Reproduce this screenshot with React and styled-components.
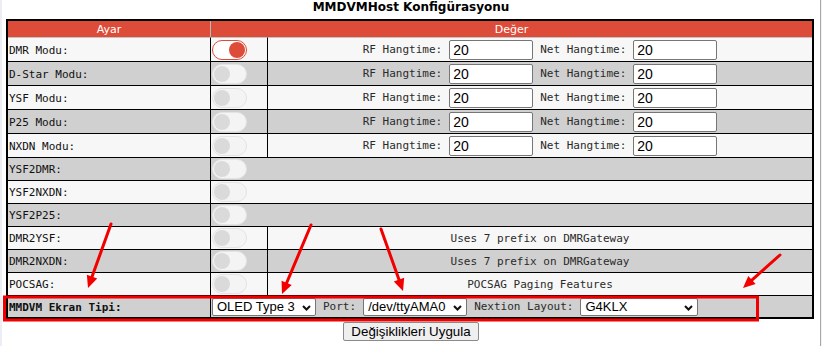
import React from 'react';
import styled, { createGlobalStyle } from 'styled-components';

const Global = createGlobalStyle`
  html, body { margin: 0; padding: 0; background: #fff; }
  body { width: 822px; height: 346px; overflow: hidden; }
  * { box-sizing: border-box; }
`;

const Page = styled.div`
  position: relative;
  width: 822px;
  height: 346px;
  box-shadow: inset 2px 0 0 #eceef3, inset -1px 0 0 #f2f2f2, inset -2px 0 0 #a8a8a8;
`;

const Title = styled.h2`
  margin: 0;
  height: 19px;
  line-height: 22px;
  text-align: center;
  font: bold 12px "DejaVu Sans", sans-serif;
  color: #000;
`;

const Table = styled.table`
  margin-left: 6px;
  width: 808px;
  border: 2px solid #000;
  border-spacing: 0;
  table-layout: fixed;
`;

const Col = styled.col`
  width: ${(p) => p.$w}px;
`;

const Th = styled.th`
  height: 16px;
  padding: 0;
  background: #dd4b39;
  color: #fff;
  font: normal 11px "DejaVu Sans", sans-serif;
  text-align: center;
  vertical-align: middle;
  border-left: ${(p) => (p.$first ? 'none' : '1px solid #b9b9b9')};
`;

const Tr = styled.tr`
  background: ${(p) => (p.$alt ? '#d0d0d0' : '#f7f7f7')};
`;

const Td = styled.td`
  height: ${(p) => p.$h}px;
  padding: 0;
  vertical-align: middle;
  border-top: 1px solid ${(p) => (p.$firstRow ? '#c4c4c4' : '#000')};
  border-left: ${(p) => (p.$first ? 'none' : '1px solid #000')};
`;

const Label = styled.div`
  padding: 1px 0 0 1px;
  font: ${(p) => (p.$bold ? 'bold' : 'normal')} 11px "DejaVu Sans Mono", monospace;
  color: #111;
  white-space: nowrap;
`;

const ToggleBox = styled.div`
  padding-left: 1px;
  display: flex;
  align-items: center;
`;

const Toggle = styled.span`
  position: relative;
  display: inline-block;
  width: 35px;
  height: 20px;
  border-radius: 10px;
  border: 1px solid ${(p) => (p.$on ? '#dd4b39' : '#e4e4e4')};
  background: ${(p) => (p.$on ? '#fff' : '#f4f4f4')};
  &::after {
    content: '';
    position: absolute;
    top: 1px;
    left: ${(p) => (p.$on ? '16px' : '1px')};
    width: 16px;
    height: 16px;
    border-radius: 50%;
    background: ${(p) => (p.$on ? '#dd4b39' : '#dadada')};
  }
`;

const Center = styled.div`
  display: flex;
  justify-content: center;
  align-items: center;
  gap: 7px;
  font: 11px "DejaVu Sans Mono", monospace;
  color: #2a2a2a;
  white-space: nowrap;
`;

const Inline = styled.div`
  display: flex;
  align-items: center;
  gap: 7px;
  padding-left: 1px;
  font: 11px "DejaVu Sans Mono", monospace;
  color: #2a2a2a;
  white-space: nowrap;
`;

const Num = styled.input`
  width: 84px;
  height: 20px;
  border: 1px solid #767676;
  border-radius: 2px;
  padding: 0 3px;
  background: #fff;
  color: #000;
  font: 14px "Liberation Sans", Arial, sans-serif;
  outline: none;
`;

const SelectWrap = styled.span`
  position: relative;
  display: inline-block;
  width: ${(p) => p.$w}px;
  height: 18px;
`;

const Select = styled.select`
  appearance: none;
  -webkit-appearance: none;
  width: 100%;
  height: 18px;
  border: 1px solid #767676;
  border-radius: 2px;
  padding: 0 0 0 4px;
  background: #fff;
  color: #000;
  font: 13px "Liberation Sans", Arial, sans-serif;
  outline: none;
`;

const Chevron = styled.svg`
  position: absolute;
  right: 5px;
  top: 7px;
  width: 9px;
  height: 6px;
  pointer-events: none;
`;

const Apply = styled.button`
  display: block;
  margin: 3px auto 0;
  height: 19px;
  padding: 0 7px;
  border: 1px solid #8a8a8a;
  border-radius: 2px;
  background: #efefef;
  color: #000;
  font: 13.33px "Liberation Sans", Arial, sans-serif;
  line-height: 17px;
`;

const Overlay = styled.svg`
  position: absolute;
  left: 0;
  top: 0;
  width: 822px;
  height: 346px;
  pointer-events: none;
`;

const RED = '#f20000';

function Arrow({ x1, y1, x2, y2 }) {
  const dx = x2 - x1;
  const dy = y2 - y1;
  const len = Math.hypot(dx, dy);
  const ux = dx / len;
  const uy = dy / len;
  const hl = 12;
  const hw = 5.5;
  const bx = x2 - ux * hl;
  const by = y2 - uy * hl;
  const px = -uy;
  const py = ux;
  return (
    <g>
      <line x1={x1} y1={y1} x2={bx + ux * 2} y2={by + uy * 2} stroke={RED} strokeWidth="3" strokeLinecap="round" />
      <polygon
        points={`${x2},${y2} ${bx + px * hw},${by + py * hw} ${bx - px * hw},${by - py * hw}`}
        fill={RED}
      />
    </g>
  );
}

function Dropdown({ w, value }) {
  return (
    <SelectWrap $w={w}>
      <Select defaultValue={value}>
        <option>{value}</option>
      </Select>
      <Chevron viewBox="0 0 9 6">
        <polyline points="1,1 4.5,4.5 8,1" fill="none" stroke="#111" strokeWidth="2" />
      </Chevron>
    </SelectWrap>
  );
}

const rows = [
  { label: 'DMR Modu:', on: true, hang: true },
  { label: 'D-Star Modu:', hang: true },
  { label: 'YSF Modu:', hang: true },
  { label: 'P25 Modu:', hang: true },
  { label: 'NXDN Modu:', hang: true },
  { label: 'YSF2DMR:' },
  { label: 'YSF2NXDN:' },
  { label: 'YSF2P25:' },
  { label: 'DMR2YSF:', note: 'Uses 7 prefix on DMRGateway' },
  { label: 'DMR2NXDN:', note: 'Uses 7 prefix on DMRGateway' },
  { label: 'POCSAG:', note: 'POCSAG Paging Features' },
];

export default function App() {
  return (
    <Page>
      <Global />
      <Title>MMDVMHost Konfigürasyonu</Title>
      <Table>
        <colgroup>
          <Col $w={202} />
          <Col $w={57} />
          <Col $w={545} />
        </colgroup>
        <thead>
          <tr>
            <Th $first>Ayar</Th>
            <Th colSpan={2}>Değer</Th>
          </tr>
        </thead>
        <tbody>
          {rows.map((r, i) => {
            const h = r.hang ? 24 : 23;
            const split = r.hang || r.note;
            return (
              <Tr key={r.label} $alt={i % 2 === 1}>
                <Td $first $h={h} $firstRow={i === 0}>
                  <Label>{r.label}</Label>
                </Td>
                <Td $h={h} $firstRow={i === 0} colSpan={split ? 1 : 2}>
                  <ToggleBox>
                    <Toggle $on={r.on} />
                  </ToggleBox>
                </Td>
                {split && (
                  <Td $h={h} $firstRow={i === 0}>
                    {r.hang ? (
                      <Center>
                        <span>RF Hangtime:</span>
                        <Num defaultValue="20" />
                        <span>Net Hangtime:</span>
                        <Num defaultValue="20" />
                      </Center>
                    ) : (
                      <Center>{r.note}</Center>
                    )}
                  </Td>
                )}
              </Tr>
            );
          })}
          <Tr $alt>
            <Td $first $h={22}>
              <Label $bold>MMDVM Ekran Tipi:</Label>
            </Td>
            <Td $h={22} colSpan={2}>
              <Inline>
                <Dropdown w={104} value="OLED Type 3" />
                <span>Port:</span>
                <Dropdown w={104} value="/dev/ttyAMA0" />
                <span>Nextion Layout:</span>
                <Dropdown w={118} value="G4KLX" />
              </Inline>
            </Td>
          </Tr>
        </tbody>
      </Table>
      <Apply type="button">Değişiklikleri Uygula</Apply>
      <Overlay viewBox="0 0 822 346">
        <rect x="4.5" y="297" width="753" height="23" fill="none" stroke={RED} strokeWidth="3" />
        <Arrow x1={111} y1={224} x2={88} y2={288} />
        <Arrow x1={311} y1={225} x2={282} y2={294} />
        <Arrow x1={381} y1={229} x2={403} y2={291} />
        <Arrow x1={780} y1={255} x2={743} y2={288} />
      </Overlay>
    </Page>
  );
}
